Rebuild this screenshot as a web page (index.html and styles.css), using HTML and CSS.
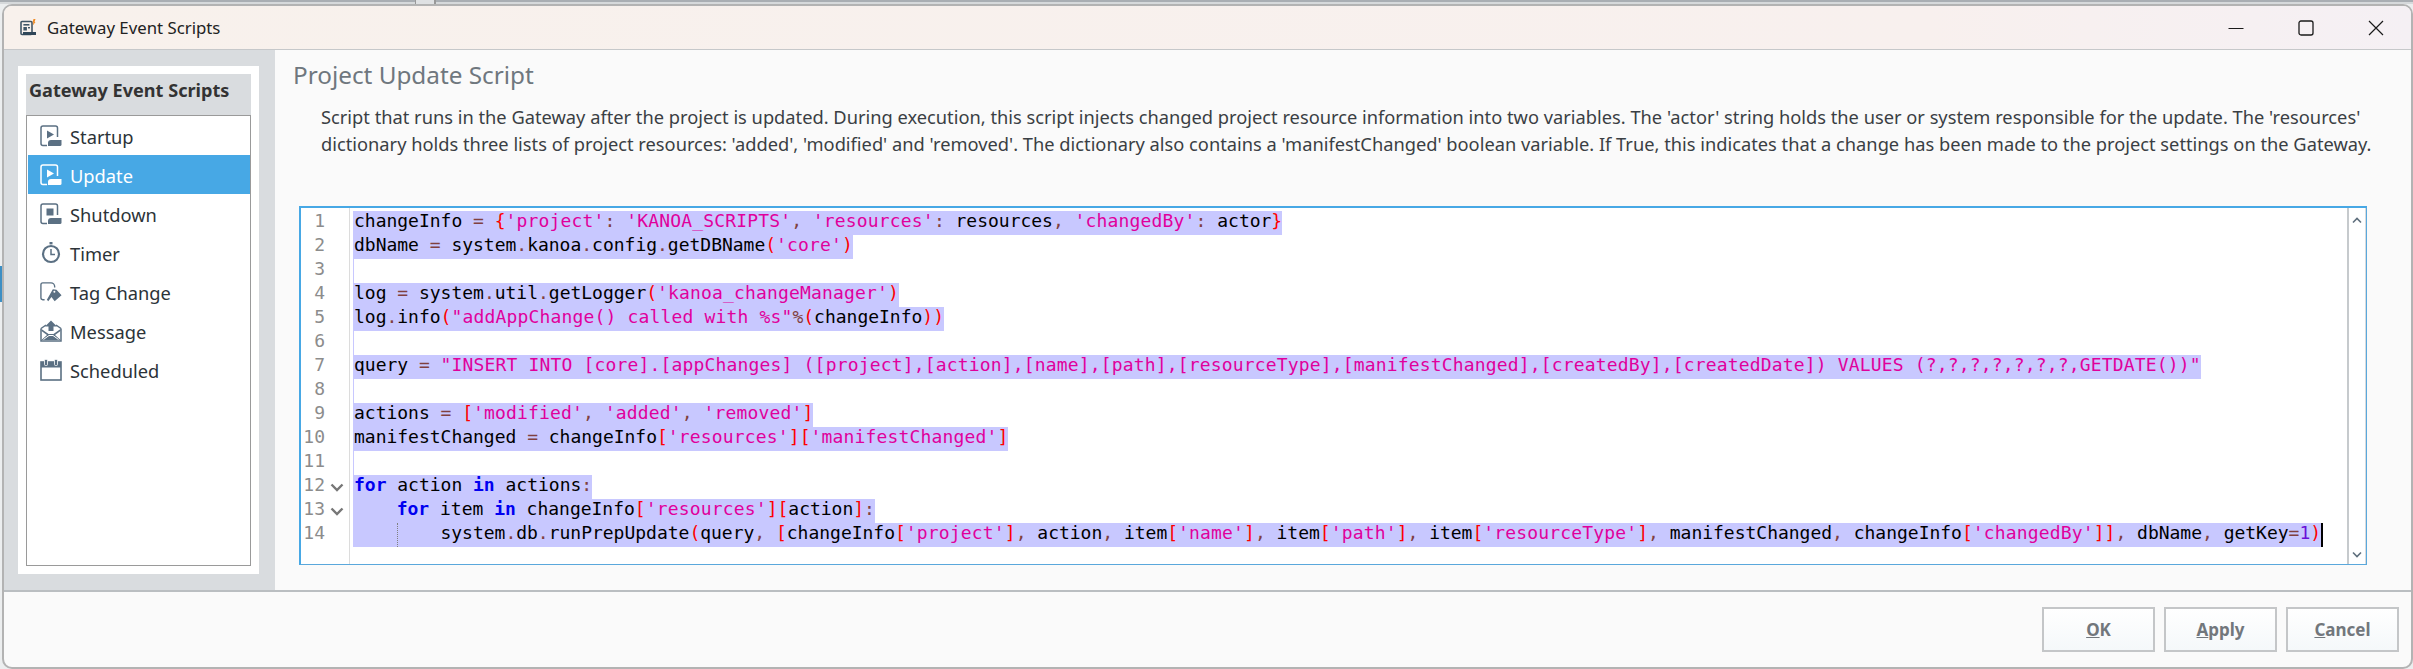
FILE: index.html
```html
<!DOCTYPE html>
<html>
<head>
    <title>Gateway Event Scripts</title>
    <link rel="stylesheet" href="styles.css">
</head>
<body>
    <div class="taskStrip"></div>
    <div class="taskTab"></div>
    <div class="desktopSliver"></div>

    <div class="window">
        <div class="titleBar">
            <svg class="titleIcon" width="16" height="18" viewBox="0 0 16 18">
                <rect x="1" y="2.5" width="11" height="13" rx="1" fill="none" stroke="#3f5566" stroke-width="1.6"/>
                <rect x="3.4" y="5" width="6" height="1.6" fill="#3f5566"/>
                <rect x="3.4" y="8" width="3.5" height="3.5" fill="#3f5566"/>
                <rect x="8" y="8" width="2" height="1.4" fill="#3f5566"/>
                <rect x="3" y="13" width="13" height="3" fill="#2f4658"/>
                <path d="M13.5 0 L15.5 0 L14.6 3 L15.5 3 L12.8 6.5 L13.4 3.6 L12.5 3.6 Z" fill="#f08a24"/>
            </svg>
            <span class="titleText">Gateway Event Scripts</span>
            <div class="winControls">
                <div class="winControl">
                    <svg width="16" height="16" viewBox="0 0 16 16"><path d="M0.5 8.5 H15.5" stroke="#1a1a1a" stroke-width="1" fill="none"/></svg>
                </div>
                <div class="winControl">
                    <svg width="16" height="16" viewBox="0 0 16 16"><rect x="1" y="1" width="14" height="14" rx="2" stroke="#1a1a1a" stroke-width="1.3" fill="none"/></svg>
                </div>
                <div class="winControl">
                    <svg width="16" height="16" viewBox="0 0 16 16"><path d="M1 1 L15 15 M15 1 L1 15" stroke="#1a1a1a" stroke-width="1.2" fill="none"/></svg>
                </div>
            </div>
        </div>

        <div class="mainArea">
            <div class="sidebar">
                <div class="sidePanel">
                    <div class="sideHeader">Gateway Event Scripts</div>
                    <div class="eventList">
                        <div class="eventItem">
                            <svg class="eventIcon" width="22" height="22" viewBox="0 0 22 22">
                                <path d="M7 20.4 H3 a2 2 0 0 1 -2 -2 V3 a2 2 0 0 1 2 -2 H15.5 a2 2 0 0 1 2 2 V12" fill="none" stroke="currentColor" stroke-width="1.5"/>
                                <path d="M7 5.5 L14 9.5 L7 13.5 Z" fill="currentColor"/>
                                <path d="M8 21 V18 a3 3 0 0 1 3 -3 H21.5 V19.5 a1.5 1.5 0 0 1 -1.5 1.5 Z" fill="currentColor"/>
                            </svg>
                            <span>Startup</span>
                        </div>
                        <div class="eventItem selected">
                            <svg class="eventIcon" width="22" height="22" viewBox="0 0 22 22">
                                <path d="M7 20.4 H3 a2 2 0 0 1 -2 -2 V3 a2 2 0 0 1 2 -2 H15.5 a2 2 0 0 1 2 2 V12" fill="none" stroke="currentColor" stroke-width="1.5"/>
                                <path d="M7 5.5 L14 9.5 L7 13.5 Z" fill="currentColor"/>
                                <path d="M8 21 V18 a3 3 0 0 1 3 -3 H21.5 V19.5 a1.5 1.5 0 0 1 -1.5 1.5 Z" fill="currentColor"/>
                            </svg>
                            <span>Update</span>
                        </div>
                        <div class="eventItem">
                            <svg class="eventIcon" width="22" height="22" viewBox="0 0 22 22">
                                <path d="M7 20.4 H3 a2 2 0 0 1 -2 -2 V3 a2 2 0 0 1 2 -2 H15.5 a2 2 0 0 1 2 2 V12" fill="none" stroke="currentColor" stroke-width="1.5"/>
                                <rect x="6.5" y="5.5" width="7" height="7" fill="currentColor"/>
                                <path d="M8 21 V18 a3 3 0 0 1 3 -3 H21.5 V19.5 a1.5 1.5 0 0 1 -1.5 1.5 Z" fill="currentColor"/>
                            </svg>
                            <span>Shutdown</span>
                        </div>
                        <div class="eventItem">
                            <svg class="eventIcon" width="22" height="22" viewBox="0 0 22 22">
                                <rect x="9.5" y="0" width="3" height="2.4" fill="currentColor"/>
                                <circle cx="11" cy="12" r="8" fill="none" stroke="currentColor" stroke-width="2.2"/>
                                <path d="M11 7 V12.5 H15" fill="none" stroke="currentColor" stroke-width="1.5"/>
                            </svg>
                            <span>Timer</span>
                        </div>
                        <div class="eventItem">
                            <svg class="eventIcon" width="24" height="22" viewBox="0 0 24 22">
                                <path d="M5 19.4 H3 a2 2 0 0 1 -2 -2 V3 a2 2 0 0 1 2 -2 H12 a4 4 0 0 1 4 4 V6" fill="none" stroke="currentColor" stroke-width="1.5"/>
                                <path d="M7.5 19.5 L14 8 L18 8.5 L23.5 14.5 L16 21 L12.5 16.5 L9 21 Z" fill="currentColor"/>
                                <circle cx="15.7" cy="10.8" r="1.1" fill="#fff"/>
                            </svg>
                            <span>Tag Change</span>
                        </div>
                        <div class="eventItem">
                            <svg class="eventIcon" width="22" height="22" viewBox="0 0 22 22">
                                <path d="M1 8.5 L6 5 M21 8.5 L16 5 M1 8.5 V21 H21 V8.5" fill="none" stroke="currentColor" stroke-width="1.5"/>
                                <path d="M11 0.5 L17 6.5 H13.5 V11 H8.5 V6.5 H5 Z" fill="currentColor"/>
                                <path d="M1.5 9 L8.5 14 H13.5 L20.5 9 V11 L15 15 L20.5 20 H1.5 L7 15 L1.5 11 Z" fill="currentColor"/>
                                <path d="M3.5 19.5 L9 15.5 H13 L18.5 19.5" fill="none" stroke="#fff" stroke-width="1"/>
                            </svg>
                            <span>Message</span>
                        </div>
                        <div class="eventItem">
                            <svg class="eventIcon" width="22" height="22" viewBox="0 0 22 22">
                                <rect x="1" y="3" width="20" height="18" fill="none" stroke="currentColor" stroke-width="1.6"/>
                                <rect x="1" y="3" width="20" height="5.5" fill="currentColor"/>
                                <rect x="4.5" y="0.5" width="3" height="6" rx="1" fill="currentColor" stroke="#fff" stroke-width="0.8"/>
                                <rect x="14.5" y="0.5" width="3" height="6" rx="1" fill="currentColor" stroke="#fff" stroke-width="0.8"/>
                            </svg>
                            <span>Scheduled</span>
                        </div>
                    </div>
                </div>
            </div>

            <div class="content">
                <div class="pageTitle">Project Update Script</div>
                <div class="pageDesc">Script that runs in the Gateway after the project is updated. During execution, this script injects changed project resource information into two variables. The 'actor' string holds the user or system responsible for the update. The 'resources'<br>dictionary holds three lists of project resources: 'added', 'modified' and 'removed'. The dictionary also contains a 'manifestChanged' boolean variable. If True, this indicates that a change has been made to the project settings on the Gateway.</div>

                <div class="editor">
                    <div class="gutter">
                        <div class="gutterRow">1</div>
                        <div class="gutterRow">2</div>
                        <div class="gutterRow">3</div>
                        <div class="gutterRow">4</div>
                        <div class="gutterRow">5</div>
                        <div class="gutterRow">6</div>
                        <div class="gutterRow">7</div>
                        <div class="gutterRow">8</div>
                        <div class="gutterRow">9</div>
                        <div class="gutterRow">10</div>
                        <div class="gutterRow">11</div>
                        <div class="gutterRow">12<svg class="fold" width="14" height="9" viewBox="0 0 14 9"><path d="M1.5 1.5 L7 7 L12.5 1.5" fill="none" stroke="#777" stroke-width="2.4"/></svg></div>
                        <div class="gutterRow">13<svg class="fold" width="14" height="9" viewBox="0 0 14 9"><path d="M1.5 1.5 L7 7 L12.5 1.5" fill="none" stroke="#777" stroke-width="2.4"/></svg></div>
                        <div class="gutterRow">14</div>
                    </div>
                    <div class="code">
                        <div class="line"><span class="sel">changeInfo <i class="o">=</i> <i class="b">{</i><i class="s">'project'</i><i class="o">:</i> <i class="s">'KANOA_SCRIPTS'</i><i class="o">,</i> <i class="s">'resources'</i><i class="o">:</i> resources<i class="o">,</i> <i class="s">'changedBy'</i><i class="o">:</i> actor<i class="b">}</i></span></div>
                        <div class="line"><span class="sel">dbName <i class="o">=</i> system<i class="o">.</i>kanoa<i class="o">.</i>config<i class="o">.</i>getDBName<i class="b">(</i><i class="s">'core'</i><i class="b">)</i></span></div>
                        <div class="line"><span class="sel blank"></span></div>
                        <div class="line"><span class="sel">log <i class="o">=</i> system<i class="o">.</i>util<i class="o">.</i>getLogger<i class="b">(</i><i class="s">'kanoa_changeManager'</i><i class="b">)</i></span></div>
                        <div class="line"><span class="sel">log<i class="o">.</i>info<i class="b">(</i><i class="s">"addAppChange() called with %s"</i><i class="o">%</i><i class="b">(</i>changeInfo<i class="b">))</i></span></div>
                        <div class="line"><span class="sel blank"></span></div>
                        <div class="line"><span class="sel">query <i class="o">=</i> <i class="s">"INSERT INTO [core].[appChanges] ([project],[action],[name],[path],[resourceType],[manifestChanged],[createdBy],[createdDate]) VALUES (?,?,?,?,?,?,?,GETDATE())"</i></span></div>
                        <div class="line"><span class="sel blank"></span></div>
                        <div class="line"><span class="sel">actions <i class="o">=</i> <i class="b">[</i><i class="s">'modified'</i><i class="o">,</i> <i class="s">'added'</i><i class="o">,</i> <i class="s">'removed'</i><i class="b">]</i></span></div>
                        <div class="line"><span class="sel">manifestChanged <i class="o">=</i> changeInfo<i class="b">[</i><i class="s">'resources'</i><i class="b">][</i><i class="s">'manifestChanged'</i><i class="b">]</i></span></div>
                        <div class="line"><span class="sel blank"></span></div>
                        <div class="line"><span class="sel"><i class="k">for</i> action <i class="k">in</i> actions<i class="o">:</i></span></div>
                        <div class="line"><span class="sel"><i class="tab">    </i><i class="k">for</i> item <i class="k">in</i> changeInfo<i class="b">[</i><i class="s">'resources'</i><i class="b">][</i>action<i class="b">]</i><i class="o">:</i></span></div>
                        <div class="line"><span class="sel"><i class="tab">    </i><i class="guide"></i><i class="tab">    </i>system<i class="o">.</i>db<i class="o">.</i>runPrepUpdate<i class="b">(</i>query<i class="o">,</i> <i class="b">[</i>changeInfo<i class="b">[</i><i class="s">'project'</i><i class="b">]</i><i class="o">,</i> action<i class="o">,</i> item<i class="b">[</i><i class="s">'name'</i><i class="b">]</i><i class="o">,</i> item<i class="b">[</i><i class="s">'path'</i><i class="b">]</i><i class="o">,</i> item<i class="b">[</i><i class="s">'resourceType'</i><i class="b">]</i><i class="o">,</i> manifestChanged<i class="o">,</i> changeInfo<i class="b">[</i><i class="s">'changedBy'</i><i class="b">]]</i><i class="o">,</i> dbName<i class="o">,</i> getKey<i class="o">=</i><i class="n">1</i><i class="b">)</i></span><span class="caret"></span></div>
                    </div>
                    <div class="scrollBar">
                        <svg width="10" height="7" viewBox="0 0 10 7"><path d="M1 5.5 L5 1.5 L9 5.5" fill="none" stroke="#5f6f7d" stroke-width="1.6"/></svg>
                        <svg width="10" height="7" viewBox="0 0 10 7"><path d="M1 1.5 L5 5.5 L9 1.5" fill="none" stroke="#5f6f7d" stroke-width="1.6"/></svg>
                    </div>
                </div>
            </div>
        </div>

        <div class="footer">
            <button class="dlgButton"><u>O</u>K</button>
            <button class="dlgButton"><u>A</u>pply</button>
            <button class="dlgButton"><u>C</u>ancel</button>
        </div>
    </div>
</body>
</html>
```

FILE: styles.css
```css
html, body {
    margin: 0;
    height: 669px;
    overflow: hidden;
}

body {
    position: relative;
    background-color: #eceeef;
    font-family: "Noto Sans", sans-serif;
}

.taskStrip {
    height: 2px;
    background-color: #a9aeb3;
    border-bottom: 2px solid #d6d9db;
}

.taskTab {
    position: absolute;
    left: 415px;
    top: 0;
    width: 18px;
    height: 4px;
    background-color: #dfe1e3;
    border-left: 1px solid #999;
    border-right: 2px solid #999;
}

.desktopSliver {
    position: absolute;
    left: 0;
    top: 266px;
    width: 2px;
    height: 36px;
    background-color: #3d8fc4;
}

.window {
    margin-left: 2px;
    width: 2407px;
    height: 661px;
    border: 2px solid #b3b3b3;
    border-radius: 10px;
    overflow: hidden;
    display: flex;
    flex-direction: column;
    background-color: #fafafa;
}

.titleBar {
    height: 43px;
    flex-shrink: 0;
    display: flex;
    align-items: center;
    padding-left: 16px;
    background: linear-gradient(to right, #f8f1ec 0%, #f8f0ee 80%, #f5f0f4 100%);
    border-bottom: 1px solid #c6c8ca;
}

.titleIcon {
    flex-shrink: 0;
}

.titleText {
    margin-left: 11px;
    font-size: 16.8px;
    color: #222;
}

.winControls {
    margin-left: auto;
    display: flex;
}

.winControl {
    width: 70px;
    height: 43px;
    display: flex;
    align-items: center;
    justify-content: center;
}

.mainArea {
    height: 540px;
    flex-shrink: 0;
    display: flex;
}

.sidebar {
    width: 271px;
    flex-shrink: 0;
    box-sizing: border-box;
    padding: 16px;
    padding-left: 14px;
    background-color: #d9dcdf;
}

.sidePanel {
    height: 100%;
    box-sizing: border-box;
    padding: 8px;
    background-color: #fff;
    display: flex;
    flex-direction: column;
}

.sideHeader {
    height: 41px;
    flex-shrink: 0;
    box-sizing: border-box;
    padding-left: 3px;
    line-height: 32px;
    background-color: #d9dcdf;
    font-size: 18.1px;
    font-weight: bold;
    color: #333;
    white-space: nowrap;
}

.eventList {
    flex: 1;
    border: 1px solid #9a9a9a;
    padding-left: 1px;
    background-color: #fff;
}

.eventItem {
    height: 39px;
    display: flex;
    align-items: center;
    padding-left: 12px;
    font-size: 18.3px;
    color: #2c3338;
}

.eventItem span {
    padding-top: 2px;
}

.eventIcon {
    width: 22px;
    flex-shrink: 0;
    margin-right: 8px;
    color: #5b7083;
}

.eventItem.selected {
    background-color: #47a8e5;
    color: #fff;
}

.eventItem.selected .eventIcon {
    color: #fff;
}

.content {
    flex: 1;
    box-sizing: border-box;
    padding-top: 8px;
    min-width: 0;
}

.pageTitle {
    margin-left: 18px;
    font-size: 24.3px;
    line-height: 34px;
    color: #6f777e;
}

.pageDesc {
    margin-left: 46px;
    margin-top: 11px;
    font-size: 18.27px;
    line-height: 27px;
    color: #3a3f44;
    white-space: nowrap;
}

.editor {
    margin-top: 49px;
    margin-left: 24px;
    width: 2068px;
    height: 359px;
    box-sizing: border-box;
    border: 1px solid #5aa8dc;
    border-top: 2px solid #47a8e5;
    border-left: 2px solid #47a8e5;
    background-color: #fff;
    display: flex;
    font-family: "DejaVu Sans Mono", monospace;
    font-size: 18px;
}

.gutter {
    width: 48px;
    flex-shrink: 0;
    padding-top: 3px;
    border-right: 1px solid #dcdcdc;
}

.gutterRow {
    height: 24px;
    line-height: 19px;
    position: relative;
    width: 24px;
    text-align: right;
    color: #8c8c8c;
}

.fold {
    position: absolute;
    left: 29px;
    top: 8px;
}

.code {
    flex: 1;
    min-width: 0;
    padding-top: 3px;
    padding-left: 3px;
    color: #000;
    letter-spacing: -0.016px;
}

.line {
    height: 24px;
    line-height: 19px;
    white-space: pre;
    display: flex;
}

.sel {
    display: block;
    height: 24px;
    padding-left: 1px;
    background-color: #c8c8ff;
}

.sel.blank {
    width: 0;
    padding-left: 1px;
}

.caret {
    display: block;
    width: 2px;
    height: 24px;
    background-color: #000;
}

.line i {
    font-style: normal;
}

.s {
    color: #e0009c;
    letter-spacing: 0.164px;
}

.b {
    color: #f00;
}

.o {
    color: #804040;
}

.k {
    color: #0000f0;
    font-weight: bold;
}

.n {
    color: #6a10d8;
}

.tab {
    letter-spacing: -0.16px;
}

.guide {
    display: inline-block;
    width: 0;
    height: 24px;
    vertical-align: top;
    border-left: 1px dotted #808080;
}

.scrollBar {
    width: 16px;
    flex-shrink: 0;
    border-left: 2px solid #c6cacd;
    border-right: 1px solid #d8dbdd;
    display: flex;
    flex-direction: column;
    justify-content: space-between;
    align-items: center;
    padding: 9px 0 6px;
}

.footer {
    flex: 1;
    display: flex;
    justify-content: flex-end;
    align-items: flex-start;
    gap: 9px;
    padding: 15px 12px 0 0;
    border-top: 2px solid #babec1;
}

.dlgButton {
    width: 113px;
    height: 45px;
    border: 2px solid #c4c6c8;
    background: linear-gradient(to bottom, #ffffff, #f5f8fa);
    font-family: "Noto Sans", sans-serif;
    font-size: 17px;
    font-weight: bold;
    color: #72777c;
    padding: 0;
}
```
